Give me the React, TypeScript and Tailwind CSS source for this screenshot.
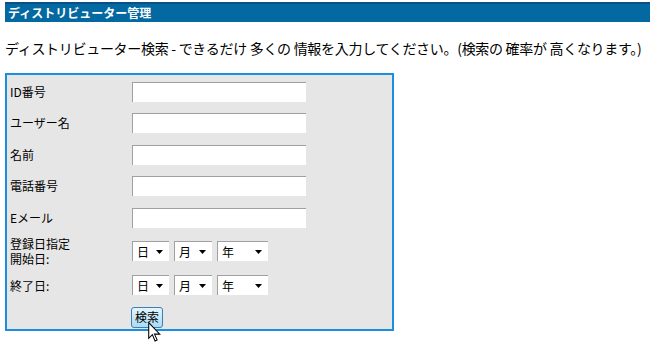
const font = { fontFamily: '"Noto Sans CJK JP", "Noto Sans", sans-serif' };

function Arrow() {
  return (
    <svg width="7" height="4" viewBox="0 0 7 4">
      <path d="M0 0 L7 0 L3.5 4 Z" fill="black" />
    </svg>
  );
}

function DateSelect({ label, width }: { label: string; width: string }) {
  return (
    <div
      className={`flex h-[20px] ${width} items-center justify-between border-t border-l border-[#a0a0a0] bg-white pl-[4px] pr-[6px] text-[12px] text-black`}
    >
      <span>{label}</span>
      <Arrow />
    </div>
  );
}

function DateRow({ children, mt, h }: { children: React.ReactNode; mt: string; h: string }) {
  return (
    <div className={`${mt} ${h} flex items-center`}>
      <div className="w-[125px] pl-[3px] text-[12px] leading-[15px] text-black">{children}</div>
      <div className="flex gap-[5px]">
        <DateSelect label="日" width="w-[37px]" />
        <DateSelect label="月" width="w-[38px]" />
        <DateSelect label="年" width="w-[51px]" />
      </div>
    </div>
  );
}

function TextRow({ label, mt }: { label: string; mt: string }) {
  return (
    <div className={`${mt} flex h-[20px] items-center`}>
      <div className="w-[125px] pl-[3px] text-[12px] text-black">{label}</div>
      <div className="h-[20px] w-[174px] border-t border-l border-[#a0a0a0] bg-white" />
    </div>
  );
}

export default function App() {
  return (
    <div className="h-[346px] w-[650px] overflow-hidden bg-white" style={font}>
      <div className="mt-[2px] ml-[5px] flex h-[20px] items-center border-t-2 border-[#0a4f86] bg-[#0469a1] pl-[3px] text-[12px] font-bold text-white">
        ディストリビューター管理
      </div>
      <div className="mt-[17px] whitespace-nowrap pl-[5px] text-[14px] leading-[18px] tracking-[-0.3px] text-black">
        ディストリビューター検索 - できるだけ 多くの 情報を入力してください。(検索の 確率が 高くなります。)
      </div>
      <div className="relative mt-[16px] ml-[5px] flex h-[258px] w-[389px] flex-col border-2 border-[#1a8fe0] bg-[#e6e6e6] pt-[7px]">
        <TextRow label="ID番号" mt="mt-0" />
        <TextRow label="ユーザー名" mt="mt-[11px]" />
        <TextRow label="名前" mt="mt-[12px]" />
        <TextRow label="電話番号" mt="mt-[11px]" />
        <TextRow label="Eメール" mt="mt-[12px]" />
        <DateRow mt="mt-[8px]" h="h-[30px]">
          登録日指定
          <br />
          開始日:
        </DateRow>
        <DateRow mt="mt-[6px]" h="h-[26px]">終了日:</DateRow>
        <div className="mt-[5px] pl-[124px]">
          <button className="h-[21px] w-[32px] rounded-[3px] border border-[#3c7fb1] bg-gradient-to-b from-[#e4f4fc] to-[#a9dbf6] text-[12px] leading-none text-black">
            検索
          </button>
        </div>
      </div>
      <svg
        className="absolute left-[148px] top-[322px]"
        width="13"
        height="20"
        viewBox="0 0 12 19"
      >
        <path
          d="M0.5 0.5 L0.5 15.5 L4 12 L6.5 18 L8.5 17 L6 11.5 L11 11.5 Z"
          fill="white"
          stroke="black"
          strokeWidth="1"
        />
      </svg>
    </div>
  );
}
